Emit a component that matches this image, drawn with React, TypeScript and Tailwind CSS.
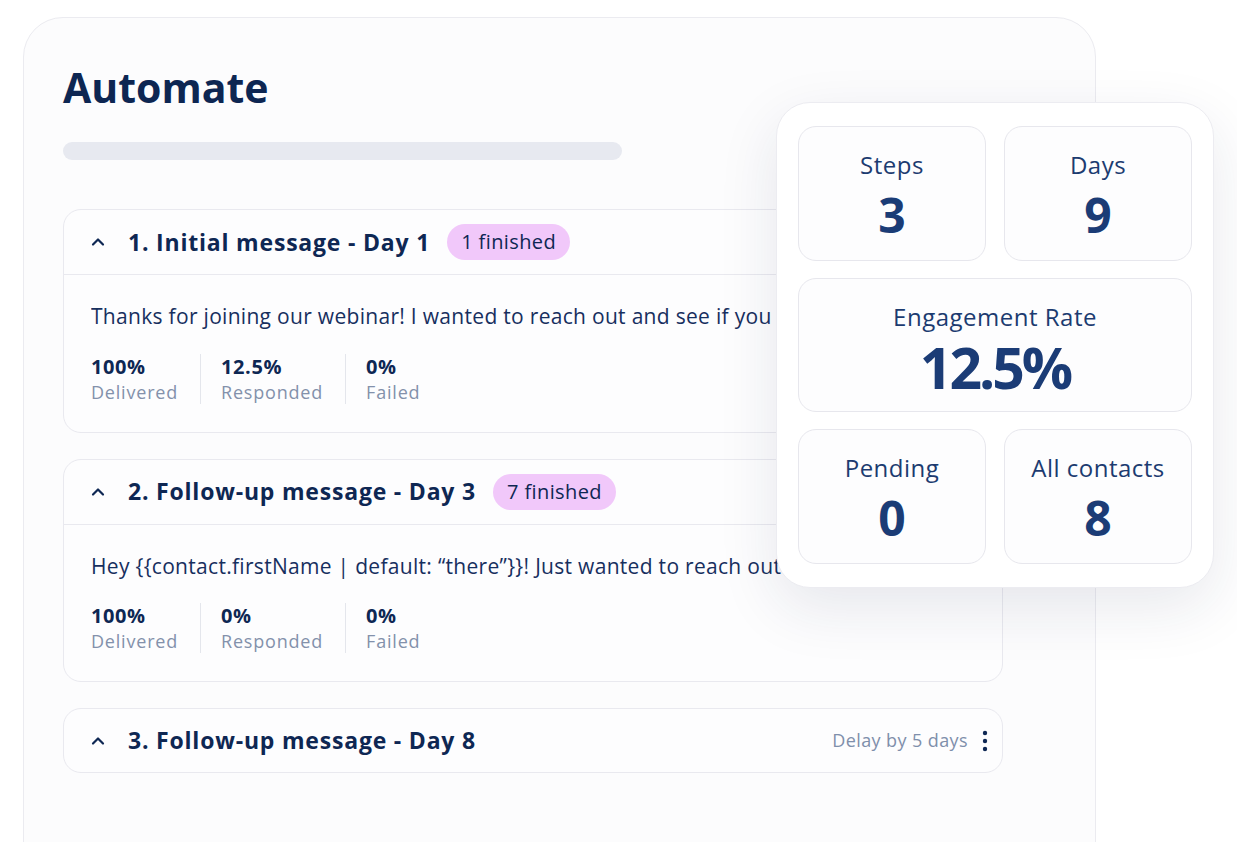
const navy = 'text-[#0e2753]';

type Stat = { value: string; label: string };

type Step = {
  title: string;
  badge?: string;
  body?: string;
  stats?: Stat[];
  delay?: string;
};

const steps: Step[] = [
  {
    title: '1. Initial message - Day 1',
    badge: '1 finished',
    body: 'Thanks for joining our webinar! I wanted to reach out and see if you had any questions about what we covered.',
    stats: [
      { value: '100%', label: 'Delivered' },
      { value: '12.5%', label: 'Responded' },
      { value: '0%', label: 'Failed' },
    ],
  },
  {
    title: '2. Follow-up message - Day 3',
    badge: '7 finished',
    body: 'Hey {{contact.firstName | default: \u201cthere\u201d}}! Just wanted to reach out again in case you missed my last message.',
    stats: [
      { value: '100%', label: 'Delivered' },
      { value: '0%', label: 'Responded' },
      { value: '0%', label: 'Failed' },
    ],
  },
  {
    title: '3. Follow-up message - Day 8',
    delay: 'Delay by 5 days',
  },
];

function ChevronUpSmall() {
  return (
    <svg aria-hidden="true" className="h-[10px] w-[14px] shrink-0" fill="none" viewBox="0 0 14 10">
      <path d="M2 7.5 7 2.5l5 5" stroke="#0e2753" strokeLinecap="round" strokeLinejoin="round" strokeWidth="2.2" />
    </svg>
  );
}

function Kebab() {
  return (
    <svg aria-hidden="true" className="h-[22px] w-[6px]" viewBox="0 0 6 22">
      <circle cx="3" cy="3" fill="#0e2753" r="2.2" />
      <circle cx="3" cy="11" fill="#0e2753" r="2.2" />
      <circle cx="3" cy="19" fill="#0e2753" r="2.2" />
    </svg>
  );
}

function StepCard({ step }: { step: Step }) {
  return (
    <div className="w-[940px] overflow-hidden rounded-[18px] border border-[#e9e9ef] bg-[#fdfdfe]">
      <div
        className={
          step.body
            ? 'flex h-[65px] items-center border-b border-[#e9e9ef] pl-[27px] pr-[14px]'
            : 'flex h-[63px] items-center pl-[27px] pr-[14px]'
        }
      >
        <ChevronUpSmall />
        <h2 className={`ml-[23px] text-[23px] font-bold tracking-[0.8px] ${navy}`}>{step.title}</h2>
        {step.badge ? (
          <span
            className={`ml-[17px] flex h-[36px] items-center rounded-full bg-[#f1c8fa] px-[14px] text-[20px] tracking-[0.4px] ${navy}`}
          >
            {step.badge}
          </span>
        ) : null}
        {step.delay ? (
          <div className="ml-auto flex items-center gap-[14px]">
            <span className="text-[18px] tracking-[0.4px] text-[#7f8fab]">{step.delay}</span>
            <Kebab />
          </div>
        ) : null}
      </div>
      {step.body ? (
        <div className="px-[27px] pb-[28px] pt-[26px]">
          <p className="overflow-hidden whitespace-nowrap text-[21px] tracking-[0.3px] text-[#172f5e]">{step.body}</p>
          <div className="mt-[21px] flex">
            {step.stats?.map((stat, index) => (
              <div
                className={
                  index === 0
                    ? 'flex flex-col pr-[22px]'
                    : 'flex flex-col border-l border-[#e4e6ec] pl-[20px] pr-[22px]'
                }
                key={stat.label}
              >
                <span className={`text-[20px] font-bold leading-[26px] tracking-[0.6px] ${navy}`}>{stat.value}</span>
                <span className="text-[18px] leading-[24px] tracking-[0.8px] text-[#8391ab]">{stat.label}</span>
              </div>
            ))}
          </div>
        </div>
      ) : null}
    </div>
  );
}

function Tile({ label, value, big }: { label: string; value: string; big?: boolean }) {
  return (
    <div
      className={
        big
          ? 'col-span-2 flex h-[134px] flex-col items-center justify-center rounded-[18px] border border-[#e7e7ed] bg-[#fdfdfe] pt-[11px]'
          : 'flex h-[135px] flex-col items-center justify-center rounded-[18px] border border-[#e7e7ed] bg-[#fdfdfe] pt-[6px]'
      }
    >
      <span className="text-[24px] leading-[30px] tracking-[0.5px] text-[#1c3b70]">{label}</span>
      <span
        className={
          big
            ? 'mt-[3px] text-[57px] font-bold leading-[64px] tracking-[-3px] text-[#1b3c76]'
            : 'mt-[7px] text-[48px] font-bold leading-[56px] text-[#1b3c76]'
        }
      >
        {value}
      </span>
    </div>
  );
}

export default function App() {
  return (
    <div
      className="relative h-[842px] w-[1237px] overflow-hidden bg-white"
      style={{ fontFamily: '"Open Sans", "Liberation Sans", sans-serif' }}
    >
      <div className="ml-[23px] mt-[17px] h-[880px] w-[1073px] rounded-[40px] border border-[#ebebf0] bg-[#fcfcfd] px-[39px] pt-[41px]">
        <h1 className="text-[41px] font-bold leading-[56px] text-[#0d2652]">Automate</h1>
        <div className="mt-[27px] h-[18px] w-[559px] rounded-full bg-[#e7e9f0]" />
        <div className="mt-[49px] flex flex-col gap-[26px]">
          {steps.map((step) => (
            <StepCard key={step.title} step={step} />
          ))}
        </div>
      </div>

      <div className="absolute left-[776px] top-[102px] grid w-[438px] grid-cols-2 gap-x-[18px] gap-y-[17px] rounded-[34px] border border-[#ececf1] bg-white px-[21px] py-[23px] shadow-[0_20px_60px_rgba(30,40,80,0.10)]">
        <Tile label="Steps" value="3" />
        <Tile label="Days" value="9" />
        <Tile big label="Engagement Rate" value="12.5%" />
        <Tile label="Pending" value="0" />
        <Tile label="All contacts" value="8" />
      </div>
    </div>
  );
}
